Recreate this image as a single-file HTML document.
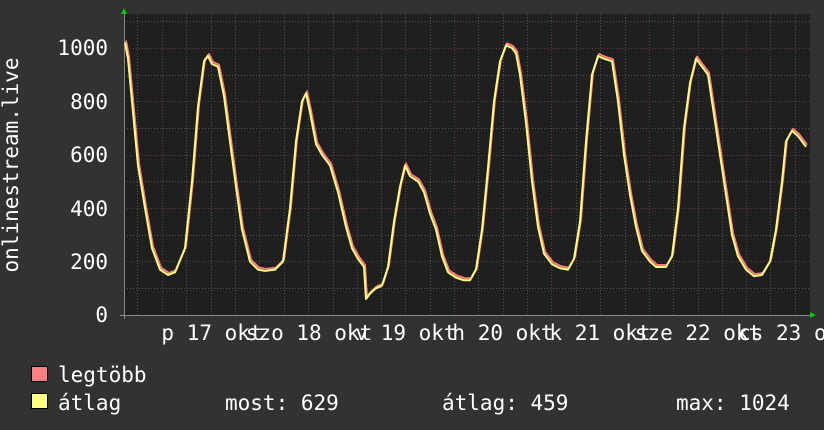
<!DOCTYPE html>
<html><head><meta charset="utf-8"><style>
html,body{margin:0;padding:0;background:#323232;}
svg{display:block}
text{font-family:"DejaVu Sans Mono","Liberation Mono",monospace;font-size:21px;fill:#fff}
</style></head><body>
<svg width="824" height="430" viewBox="0 0 824 430" xmlns="http://www.w3.org/2000/svg">
<rect width="824" height="430" fill="#323232"/>
<rect x="124" y="14" width="686" height="302" fill="#1f1f1f"/>
<g stroke="#555" stroke-width="1" stroke-dasharray="1,2">
<path d="M137.5 14V316M186.5 14V316M211.5 14V316M235.5 14V316M284.5 14V316M308.5 14V316M333.5 14V316M381.5 14V316M405.5 14V316M430.5 14V316M478.5 14V316M503.5 14V316M527.5 14V316M576.5 14V316M600.5 14V316M625.5 14V316M673.5 14V316M698.5 14V316M722.5 14V316M770.5 14V316M795.5 14V316"/>
<path d="M124 288.5H810M124 235.5H810M124 181.5H810M124 128.5H810M124 75.5H810M124 21.5H810"/>
</g>
<g stroke="#6a3a3a" stroke-width="1" stroke-dasharray="1,2">
<path d="M162.5 14V316M259.5 14V316M357.5 14V316M454.5 14V316M551.5 14V316M649.5 14V316M746.5 14V316"/>
<path d="M124 261.5H810M124 208.5H810M124 155.5H810M124 101.5H810M124 48.5H810"/>
</g>
<g stroke="#888" stroke-width="1"><path d="M120 315.5H810M124.5 14V319"/></g>
<polygon points="121,14 127,14 124,8" fill="#0c0"/>
<polygon points="810,312 810,318 816,315" fill="#0c0"/>
<g fill="none" stroke-width="2" stroke-linejoin="round">
<g id="d"><polyline points="125,1020 128,960 132,800 138,560 145,400 152,250 160,170 168,150 175,160 185,250 192,500 198,780 204,950 208,970 212,940 218,930 224,820 230,650 236,480 242,320 250,200 258,170 265,165 275,170 283,200 290,400 296,650 302,800 306,830 310,760 316,640 322,600 330,560 338,460 346,330 352,250 358,210 364,180 366,60 370,80 376,100 382,110 388,180 394,350 400,480 405,560 410,520 418,500 424,460 430,380 436,320 442,220 448,160 456,140 464,130 470,130 476,170 482,320 488,550 494,800 500,950 506,1010 512,1000 516,980 520,900 526,720 532,500 538,330 544,230 552,190 560,175 568,170 574,210 580,350 586,650 592,900 598,970 604,960 612,950 618,800 624,600 630,450 636,330 642,240 650,200 656,180 666,180 672,220 678,400 684,700 690,870 696,960 702,930 708,900 714,750 720,600 726,450 732,300 738,220 746,170 754,145 762,150 770,200 776,320 782,500 786,650 792,690 798,670 806,630" transform="translate(0,315) scale(1,-0.267)" vector-effect="non-scaling-stroke"/></g>
<g stroke="#ff7b7b" transform="translate(1,-2)"><use href="#d"/></g>
<g stroke="#ffff80"><use href="#d"/></g>
</g>
<g text-anchor="end"><text x="108" y="55">1000</text><text x="108" y="109">800</text><text x="108" y="162">600</text><text x="108" y="216">400</text><text x="108" y="269">200</text><text x="108" y="322">0</text></g>
<text transform="translate(18,165) rotate(-90)" text-anchor="middle">onlinestream.live</text>
<g text-anchor="middle">
<text x="212" y="340">p 17 okt</text>
<text x="309" y="340">szo 18 okt</text>
<text x="406" y="340">v 19 okt</text>
<text x="503" y="340">h 20 okt</text>
<text x="600" y="340">k 21 okt</text>
<text x="698" y="340">sze 22 okt</text>
<text x="795" y="340">cs 23 okt</text>
</g>
<rect x="31.5" y="366.5" width="16" height="15" fill="#ff8080" stroke="#000"/>
<rect x="31.5" y="393.5" width="16" height="15" fill="#ffff80" stroke="#000"/>
<text x="58" y="382">legtöbb</text>
<text x="58" y="410">átlag</text>
<text x="225" y="410">most: 629</text>
<text x="442" y="410">átlag: 459</text>
<text x="676" y="410">max: 1024</text>
</svg>
</body></html>
